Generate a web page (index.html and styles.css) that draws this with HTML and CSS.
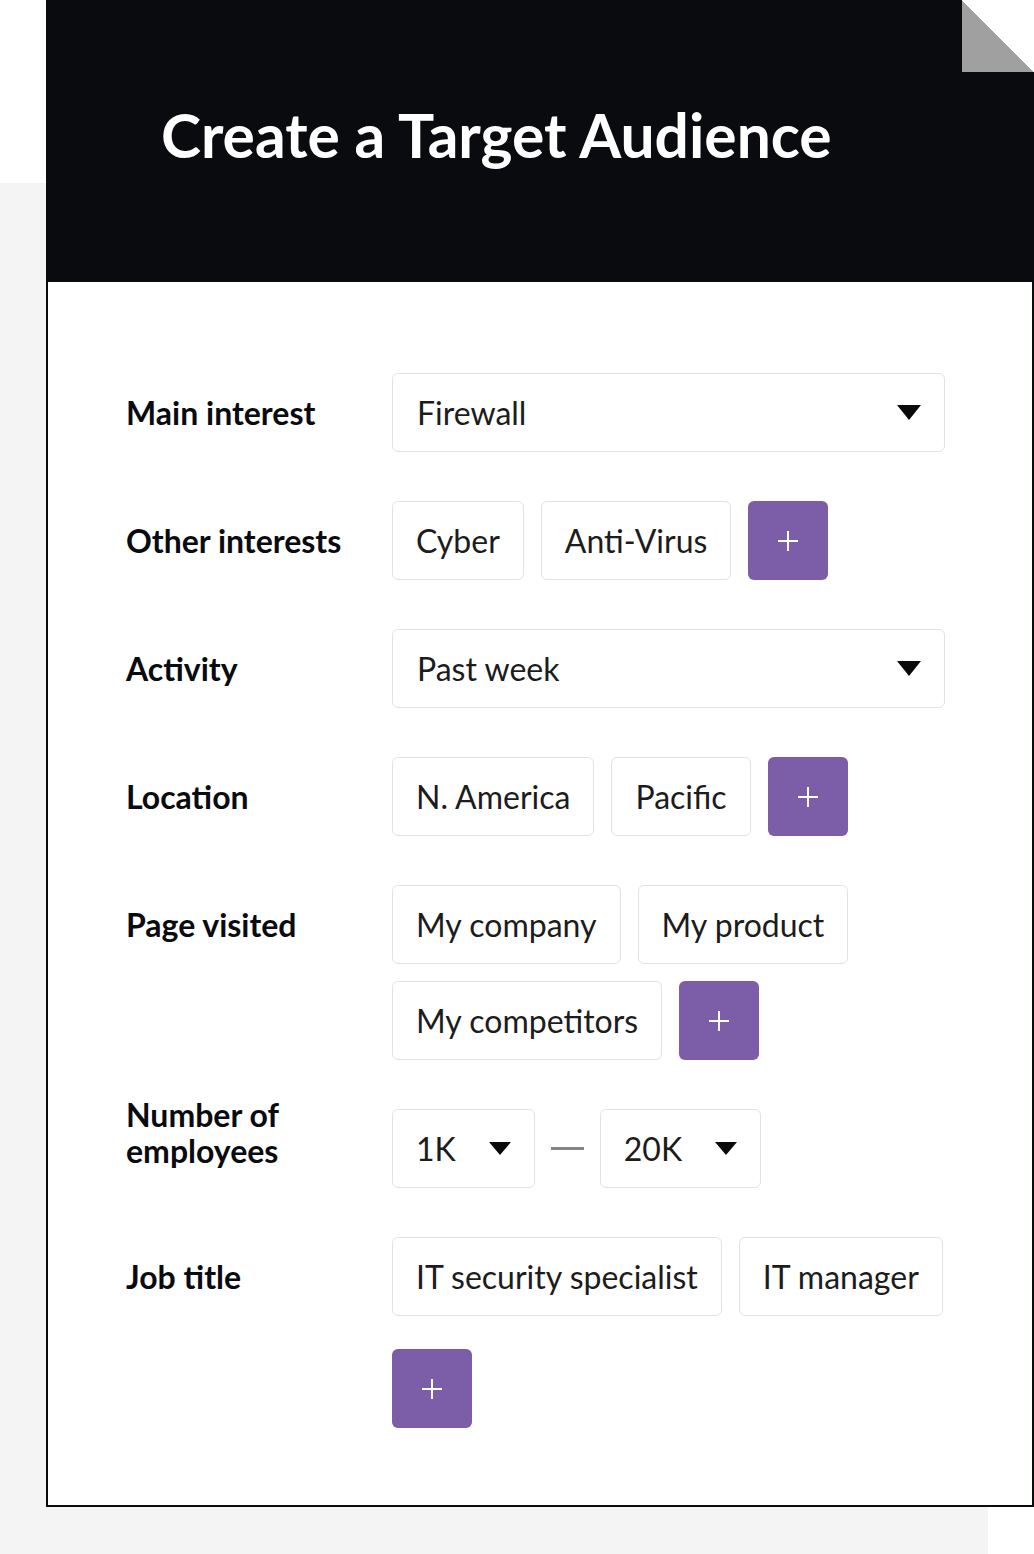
FILE: index.html
```html
<!DOCTYPE html>
<html>
<head>
    <title>Create a Target Audience</title>
    <meta name="viewport" content="width=device-width, initial-scale=1.0">
    <link rel="stylesheet" href="styles.css">
</head>
<body>
    <div class="page">
        <div class="card">
            <!-- Header -->
            <div class="card-header">
                <h1>Create a Target Audience</h1>
            </div>

            <!-- Form -->
            <div class="form">
                <div class="row">
                    <div class="label">Main interest</div>
                    <div class="controls">
                        <div class="select select-wide">
                            <span>Firewall</span>
                            <svg class="caret" width="24" height="15" viewBox="0 0 24 15"><polygon points="0,0 24,0 12,15"/></svg>
                        </div>
                    </div>
                </div>

                <div class="row">
                    <div class="label">Other interests</div>
                    <div class="controls">
                        <div class="chip">Cyber</div>
                        <div class="chip">Anti-Virus</div>
                        <button class="add-btn"><svg width="20" height="20" viewBox="0 0 20 20"><path d="M10 0V20M0 10H20"/></svg></button>
                    </div>
                </div>

                <div class="row">
                    <div class="label">Activity</div>
                    <div class="controls">
                        <div class="select select-wide">
                            <span>Past week</span>
                            <svg class="caret" width="24" height="15" viewBox="0 0 24 15"><polygon points="0,0 24,0 12,15"/></svg>
                        </div>
                    </div>
                </div>

                <div class="row">
                    <div class="label">Location</div>
                    <div class="controls">
                        <div class="chip">N. America</div>
                        <div class="chip">Pacific</div>
                        <button class="add-btn"><svg width="20" height="20" viewBox="0 0 20 20"><path d="M10 0V20M0 10H20"/></svg></button>
                    </div>
                </div>

                <div class="row">
                    <div class="label">Page visited</div>
                    <div class="controls">
                        <div class="chip">My company</div>
                        <div class="chip">My product</div>
                        <div class="chip">My competitors</div>
                        <button class="add-btn"><svg width="20" height="20" viewBox="0 0 20 20"><path d="M10 0V20M0 10H20"/></svg></button>
                    </div>
                </div>

                <div class="row">
                    <div class="label label-two-line">Number of<br>employees</div>
                    <div class="controls range">
                        <div class="select select-small">
                            <span>1K</span>
                            <svg class="caret" width="22" height="13" viewBox="0 0 22 13"><polygon points="0,0 22,0 11,13"/></svg>
                        </div>
                        <span class="dash"></span>
                        <div class="select select-small">
                            <span>20K</span>
                            <svg class="caret" width="22" height="13" viewBox="0 0 22 13"><polygon points="0,0 22,0 11,13"/></svg>
                        </div>
                    </div>
                </div>

                <div class="row">
                    <div class="label">Job title</div>
                    <div class="controls controls-loose">
                        <div class="chip">IT security specialist</div>
                        <div class="chip">IT manager</div>
                        <button class="add-btn"><svg width="20" height="20" viewBox="0 0 20 20"><path d="M10 0V20M0 10H20"/></svg></button>
                    </div>
                </div>
            </div>
        </div>
    </div>
</body>
</html>
```

FILE: styles.css
```css
:root {
    --ink: #0a0b0f;
    --text: #1c1c1c;
    --line: #e3e3dd;
    --purple: #7b5da8;
    --paper: #f4f4f4;
}

body {
    margin: 0;
    background: white;
    font-family: "Lato", "Open Sans", sans-serif;
    color: var(--text);
}

/* grey sheet peeking out behind the card */
.page {
    width: 988px;
    min-height: 1554px;
    padding-left: 46px;
    background: linear-gradient(var(--paper), var(--paper)) 0 183px / 988px 1371px no-repeat;
}

.card {
    position: relative;
    box-sizing: border-box;
    width: 988px;
    background: white;
    border: 2px solid var(--ink);
    border-top: none;
}

/* folded corner */
.card::after {
    content: "";
    position: absolute;
    top: 0;
    right: -2px;
    width: 72px;
    height: 72px;
    background: linear-gradient(to bottom left, white 50%, #a0a0a0 50%);
}

.card-header {
    background: var(--ink);
    height: 282px;
    margin: 0 -2px;
    padding-left: 115px;
    padding-top: 100px;
    box-sizing: border-box;
}

.card-header h1 {
    margin: 0;
    color: white;
    font-size: 60.5px;
    font-weight: bold;
    line-height: 70px;
}

.form {
    padding: 91px 0 77px 78px;
    display: flex;
    flex-direction: column;
    gap: 49px;
}

.row {
    display: flex;
    align-items: flex-start;
}

.label {
    width: 266px;
    flex-shrink: 0;
    font-size: 32px;
    font-weight: bold;
    color: var(--ink);
    line-height: 35px;
    padding-top: 22px;
}

.label-two-line {
    padding-top: 0;
    margin-top: -12px;
    line-height: 36px;
}

.controls {
    width: 560px;
    display: flex;
    flex-wrap: wrap;
    gap: 17px;
}

.controls-loose {
    row-gap: 33px;
}

.range {
    align-items: center;
    gap: 16px;
}

.select,
.chip {
    box-sizing: border-box;
    height: 79px;
    border: 1.5px solid var(--line);
    border-radius: 6px;
    display: flex;
    align-items: center;
    font-size: 32px;
    color: var(--text);
    background: white;
}

.select {
    justify-content: space-between;
    padding: 0 23px 0 24px;
}

.select-wide {
    width: 553px;
}

.select-small {
    padding-left: 23px;
    gap: 33px;
}

.caret {
    fill: #0a0a0a;
    display: block;
}

.chip {
    padding: 0 23px;
}

.dash {
    width: 33px;
    height: 3px;
    background: #868686;
}

.add-btn {
    width: 80px;
    height: 79px;
    border: none;
    border-radius: 6px;
    background: var(--purple);
    display: flex;
    align-items: center;
    justify-content: center;
    padding: 0;
}

.add-btn svg {
    stroke: white;
    stroke-width: 2;
    display: block;
}
```
